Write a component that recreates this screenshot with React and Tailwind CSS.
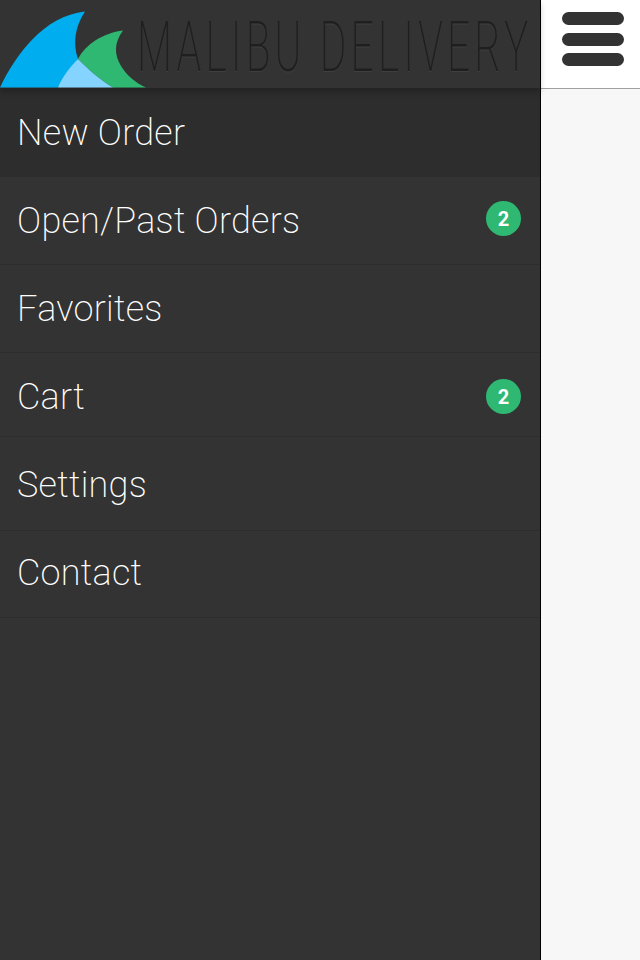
const menuItems = [
  { label: "New Order", row: "h-[89px] pt-[24px] bg-[#2d2d2d]" },
  { label: "Open/Past Orders", badge: 2, row: "h-[88px] pt-[23px] border-b border-[#2d2d2d]", badgeClass: "-mt-[5px]" },
  { label: "Favorites", row: "h-[88px] pt-[23px] border-b border-[#2d2d2d]" },
  { label: "Cart", badge: 2, row: "h-[84px] pt-[23px] border-b border-[#2d2d2d]", badgeClass: "-mt-[1px]" },
  { label: "Settings", row: "h-[94px] pt-[27px] border-b border-[#2d2d2d]" },
  { label: "Contact", row: "h-[87px] pt-[21px] border-b border-[#2d2d2d]" },
]

function Logo() {
  return (
    <svg viewBox="0 0 146 88" className="w-[146px] h-[88px] shrink-0">
      <path d="M0 87.5C16 54 44 16 85 11.5C76 25 72 42 78 59L58 87.5Z" fill="#00adef" />
      <path d="M78 59C86 44 103 33 123 30.5C114 43 114 54 121 66C127 76 136 83 146 87.5H113C100 80 88 69 78 59Z" fill="#2eb872" />
      <path d="M78 59C88 69 100 80 113 87.5H58C63 76 70 67 78 59Z" fill="#85d4ff" />
    </svg>
  )
}

export default function App() {
  return (
    <div className="flex w-[640px] h-[960px] overflow-hidden font-['Roboto',sans-serif]">
      <div className="w-[541px] shrink-0 bg-[#333333] border-r border-black flex flex-col">
        <div className="h-[88px] flex shrink-0 overflow-hidden shadow-[0_4px_6px_rgba(0,0,0,0.25)] relative z-10">
          <Logo />
          <div className="-ml-[9px] origin-left scale-x-[0.58] whitespace-nowrap text-[70px] leading-[94px] font-extralight tracking-[7.3px] text-[#1f1f1f] [text-shadow:0_1px_0_rgba(255,255,255,0.06)]">
            MALIBU DELIVERY
          </div>
        </div>

        {menuItems.map((item) => (
          <div key={item.label} className={`shrink-0 pl-[17px] pr-[19px] ${item.row}`}>
            <div className="h-[42px] flex items-center justify-between">
              <span className="text-[36px] leading-[42px] tracking-[0.27px] font-extralight text-white">{item.label}</span>
              {item.badge && (
                <span className={`w-[35px] h-[35px] rounded-full bg-[#2eb872] flex items-center justify-center text-[20px] font-bold text-white ${item.badgeClass}`}>
                  {item.badge}
                </span>
              )}
            </div>
          </div>
        ))}
      </div>

      <div className="flex-1 bg-[#f7f7f7]">
        <div className="h-[89px] bg-white border-b border-[#a0a0a0] flex flex-col items-center gap-[7.5px] pt-[12px] pl-[5px]">
          <div className="w-[62px] h-[13px] rounded-[7px] bg-[#333333]" />
          <div className="w-[62px] h-[13px] rounded-[7px] bg-[#333333]" />
          <div className="w-[62px] h-[13px] rounded-[7px] bg-[#333333]" />
        </div>
      </div>
    </div>
  )
}
